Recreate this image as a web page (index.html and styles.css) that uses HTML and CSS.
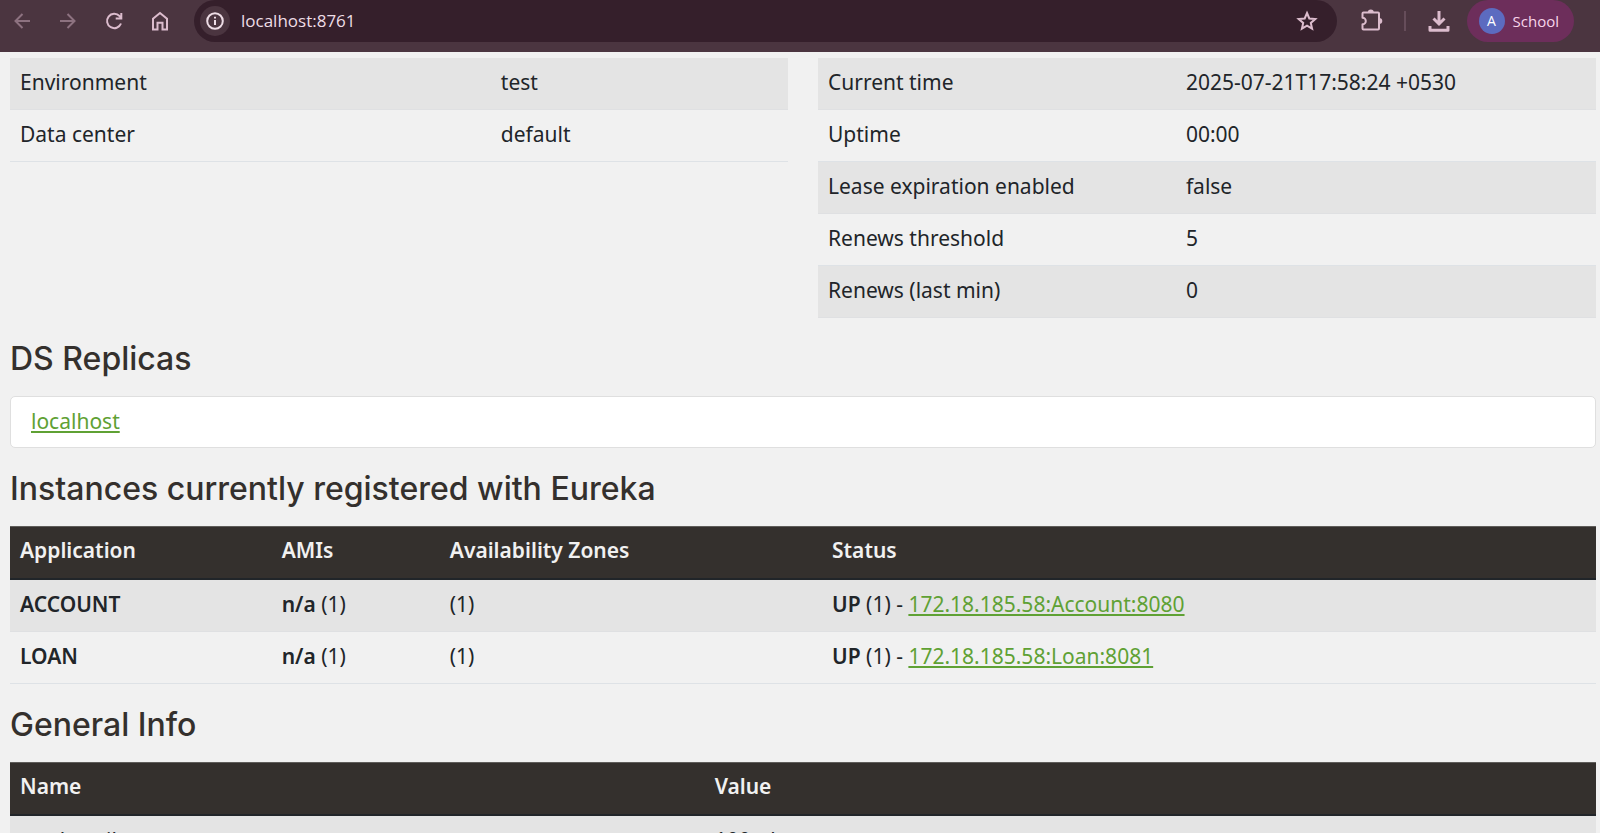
FILE: index.html
```html
<!DOCTYPE html>
<html lang="en">
<head>
<meta charset="utf-8">
<title>Eureka</title>
<link rel="stylesheet" href="styles.css">
</head>
<body>
<header class="toolbar">
  <nav class="nav-buttons">
    <button class="icon-button faded" aria-label="Back"><svg width="24" height="24" viewBox="0 0 24 24"><path d="M20 12H5.500M12.500 5l-7 7 7 7"/></svg></button>
    <button class="icon-button faded" aria-label="Forward"><svg width="24" height="24" viewBox="0 0 24 24"><path d="M4 12h14.500M11.500 5l7 7-7 7"/></svg></button>
    <button class="icon-button" aria-label="Reload"><svg width="24" height="24" viewBox="0 0 24 24"><path d="M19 14.500A7.200 7.200 0 1 1 17.500 7L19 8.500M19.300 4v5.500h-5.600"/></svg></button>
    <button class="icon-button" aria-label="Home"><svg width="24" height="24" viewBox="0 0 24 24"><path d="M5 20.500V9.800l7-5.800 7 5.800v10.700h-4.500v-6.800h-5v6.800z"/></svg></button>
  </nav>
  <div class="address">
    <button class="site-info" aria-label="Site information"><svg width="20" height="20" viewBox="0 0 20 20"><circle cx="10" cy="10" r="7.800"/><path d="M10 9v5M10 5.700v1.800"/></svg></button>
    <input class="url" type="text" value="localhost:8761" aria-label="Address">
    <button class="icon-button star" aria-label="Bookmark"><svg width="24" height="24" viewBox="0 0 24 24"><path d="M12 4l2.300 5.500 6 .500-4.500 3.900 1.300 5.800-5.100-3.100-5.100 3.100 1.300-5.800L3.700 10l6-.500z"/></svg></button>
  </div>
  <div class="actions">
    <button class="icon-button" aria-label="Extensions"><svg width="24" height="24" viewBox="0 0 24 24"><path stroke-linejoin="round" d="M4.500 3.500h14.500a1 1 0 0 1 1 1v15a1 1 0 0 1-1 1H4.500a1 1 0 0 1-1-1v-4.200a3.300 3.300 0 0 0 0-6.600V4.500a1 1 0 0 1 1-1z"/><path class="solid" d="M8.800 3.500a3 3 0 0 1 6 0zM20 9a3.300 3 0 0 1 0 6z"/></svg></button>
    <span class="divider"></span>
    <button class="icon-button" aria-label="Downloads"><svg class="bold" width="24" height="24" viewBox="0 0 24 24"><path d="M12 2v13M6.500 9.500l5.500 5.500 5.500-5.500"/><path stroke-linejoin="round" d="M3 17v4.200h18V17"/></svg></button>
    <button class="profile"><span class="avatar">A</span>School</button>
  </div>
</header>
<main class="page">
  <div class="status-grid">
    <table class="data">
      <colgroup><col class="w62"><col></colgroup>
      <tbody>
        <tr><td>Environment</td><td>test</td></tr>
        <tr><td>Data center</td><td>default</td></tr>
      </tbody>
    </table>
    <table class="data">
      <colgroup><col class="w46"><col></colgroup>
      <tbody>
        <tr><td>Current time</td><td>2025-07-21T17:58:24 +0530</td></tr>
        <tr><td>Uptime</td><td>00:00</td></tr>
        <tr><td>Lease expiration enabled</td><td>false</td></tr>
        <tr><td>Renews threshold</td><td>5</td></tr>
        <tr><td>Renews (last min)</td><td>0</td></tr>
      </tbody>
    </table>
  </div>
  <h1>DS Replicas</h1>
  <ul class="replicas"><li><a href="#">localhost</a></li></ul>
  <h1>Instances currently registered with Eureka</h1>
  <table class="data">
    <colgroup><col class="w17"><col class="w11"><col class="w24"><col></colgroup>
    <thead><tr><th>Application</th><th>AMIs</th><th>Availability Zones</th><th>Status</th></tr></thead>
    <tbody>
      <tr><td><b>ACCOUNT</b></td><td><b>n/a</b> (1)</td><td>(1)</td><td><b>UP</b> (1) - <a href="#">172.18.185.58:Account:8080</a></td></tr>
      <tr><td><b>LOAN</b></td><td><b>n/a</b> (1)</td><td>(1)</td><td><b>UP</b> (1) - <a href="#">172.18.185.58:Loan:8081</a></td></tr>
    </tbody>
  </table>
  <h1>General Info</h1>
  <table class="data">
    <colgroup><col class="w44"><col></colgroup>
    <thead><tr><th>Name</th><th>Value</th></tr></thead>
    <tbody>
      <tr><td>total-avail-memory</td><td>100mb</td></tr>
    </tbody>
  </table>
</main>
</body>
</html>
```
FILE: styles.css
```css
* { box-sizing: border-box; }
html { height: 100%; overflow: hidden; }
body {
  height: 100%;
  margin: 0;
  overflow: hidden;
  background: #f1f1f1;
  color: #212529;
  font: 21px/31px "Noto Sans", sans-serif;
}
button { border: 0; padding: 0; background: none; color: inherit; font: inherit; }
svg { display: block; fill: none; stroke: currentColor; stroke-width: 2; }
svg .solid { fill: currentColor; stroke: none; }
svg.bold { stroke-width: 3; }

.toolbar {
  display: flex;
  height: 52px;
  padding: 0 26px 10px 10px;
  background: #4b3540;
  color: #dcbccd;
}
.nav-buttons, .actions { display: flex; align-items: center; }
.nav-buttons { gap: 22px; margin-right: 22px; }
.icon-button { display: grid; place-items: center; width: 24px; height: 24px; }
.faded { color: #8d7280; }
.address {
  display: flex;
  flex: 1;
  align-items: center;
  padding: 0 18px 0 6px;
  border-radius: 21px;
  background: #351f2b;
}
.site-info {
  display: grid;
  place-items: center;
  width: 30px;
  height: 30px;
  border-radius: 50%;
  background: #4b3540;
  color: #eedde6;
}
.url {
  flex: 1;
  min-width: 0;
  margin-left: 11px;
  padding: 0;
  border: 0;
  background: none;
  color: #eedde6;
  font: 17px/24px "Open Sans", sans-serif;
}
.actions { gap: 21px; margin-left: 22px; }
.divider { width: 2px; height: 20px; background: #664d5a; }
.profile {
  display: flex;
  align-items: center;
  gap: 8px;
  height: 42px;
  margin-left: -5px;
  padding: 0 15px 0 12px;
  border-radius: 21px;
  background: #6d2e5b;
  color: #f8d5ea;
  font: 15px/24px "Open Sans", sans-serif;
}
.avatar {
  display: grid;
  place-items: center;
  width: 26px;
  height: 26px;
  border-radius: 50%;
  background: #5c6bc0;
  color: #fff;
  font-size: 14px;
}

.page { padding: 6px 4px 0 10px; }
.status-grid { display: grid; grid-template-columns: 1fr 1fr; gap: 30px; align-items: start; }
.data { width: 100%; border-collapse: separate; border-spacing: 0; table-layout: fixed; }
.w62 { width: 61.8%; }
.w46 { width: 46%; }
.w17 { width: 16.5%; }
.w11 { width: 10.6%; }
.w24 { width: 24.1%; }
.w44 { width: 43.8%; }
td, th { padding: 9px 10px 11px; text-align: left; white-space: nowrap; }
td { border-bottom: 1px solid #dee2e6; }
tbody tr:nth-child(odd) td { background: #e4e4e4; border-color: #dfe0e2; }
th {
  padding: 8px 10px 12px;
  border-top: 1px solid #5f5d5a;
  border-bottom: 2px solid #212529;
  background: #34302d;
  color: #f1f1f1;
}
th, b { font-weight: 600; }
a { color: #5fa134; text-decoration: underline; }
h1 {
  margin: 22px 0 18px;
  color: #34302d;
  font: 500 32px/38px Inter, sans-serif;
}
.replicas {
  margin: 0;
  padding: 9px 20px 10px;
  border: 1px solid #dfdfdf;
  border-radius: 5px;
  background: #fff;
  list-style: none;
}
```
